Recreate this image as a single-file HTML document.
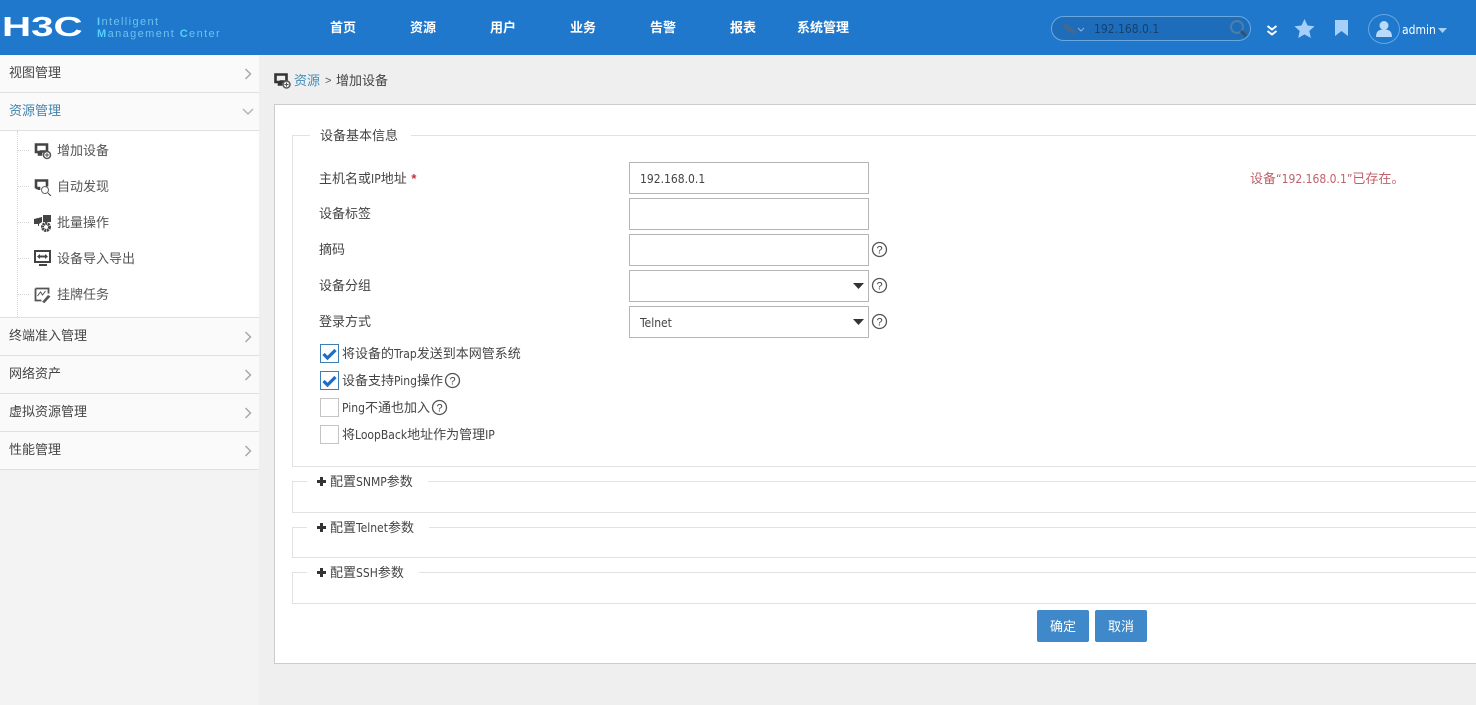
<!DOCTYPE html>
<html lang="zh"><head><meta charset="utf-8"><title>增加设备</title>
<style>
html,body{margin:0;padding:0}
body{width:1476px;height:705px;position:relative;overflow:hidden;background:#efefef;font:13px/16px "Liberation Sans","WenQuanYi Zen Hei","Noto Sans CJK SC",sans-serif;color:#444}
i{font:normal 12px/16px "DejaVu Sans Condensed","DejaVu Sans","Liberation Sans",sans-serif;font-stretch:condensed}
.a{position:absolute;white-space:nowrap}
.r{position:absolute;box-sizing:border-box}
.nav{top:20px;color:#fff;font-size:13px;font-weight:bold;width:80px;text-align:center}
.side{left:0;width:259px;height:38px;box-sizing:border-box;background:#fafafa;border-bottom:1px solid #e0e0e0}
.side span{position:absolute;left:9px;top:10px;color:#444}
.side svg{position:absolute;left:244px;top:13px}
.sub{left:57px;color:#555}
.ic{position:absolute}
.lbl{left:319px;color:#444}
.inp{position:absolute;left:629px;width:240px;height:32px;box-sizing:border-box;background:#fff;border:1px solid #b5b5b5;padding:8px 10px;color:#444}
.cb{position:absolute;left:320px;width:19px;height:19px;box-sizing:border-box;border:1px solid #c4c4c4;background:#fff}
.cb.on{background:#fff;border:1px solid #3d7eb5}
.fs{position:absolute;left:292px;width:1184px;box-sizing:border-box;border:1px solid #e2e2e2;border-right:0}
.leg{position:absolute;background:#fff;padding:0 15px 0 10px;color:#444}
.btn{position:absolute;top:610px;width:52px;height:32px;background:#3f88ca;color:#fff;text-align:center;line-height:34px;border-radius:2px}
.dash{position:absolute;border-top:1px dotted #d5d5d5;width:11px;left:18px}
</style></head><body>

<div class="r" style="left:0;top:0;width:1476px;height:55px;background:#1f78cb"></div>
<div class="a" style="left:2px;top:9px;font:bold 28px/36px 'Liberation Sans',sans-serif;color:#fff;transform:scaleX(1.44);transform-origin:left">H3C</div>
<div class="a" style="left:97px;top:16px;font-size:11px;line-height:12px;color:#6cc2f0;letter-spacing:1.4px"><b style="color:#55d0ff">I</b>ntelligent<br><b style="color:#55d0ff">M</b>anagement <b style="color:#55d0ff">C</b>enter</div>

<div class="a nav" style="left:303px">首页</div>
<div class="a nav" style="left:383px">资源</div>
<div class="a nav" style="left:463px">用户</div>
<div class="a nav" style="left:543px">业务</div>
<div class="a nav" style="left:623px">告警</div>
<div class="a nav" style="left:703px">报表</div>
<div class="a nav" style="left:783px">系统管理</div>

<div class="r" style="left:1051px;top:16px;width:200px;height:25px;border:1px solid #6aa8e2;border-radius:13px;background:#1e6dbb"></div>
<svg class="ic" style="left:1060px;top:21px" width="30" height="16"><path d="M2 4l5-1 4 4 5 3-2 3-5-2-5-4z" fill="#46688c"/><path d="M18 7l3 3 3-3" fill="none" stroke="#8fb4d8"/></svg>
<div class="a" style="left:1094px;top:21px;color:#17406b"><i>192.168.0.1</i></div>
<svg class="ic" style="left:1228px;top:19px" width="22" height="20"><circle cx="9" cy="8" r="6" fill="none" stroke="#4d7ea8" stroke-width="2"/><path d="M13 12l5 5" stroke="#33506c" stroke-width="3"/></svg>
<svg class="ic" style="left:1265px;top:24px" width="14" height="13"><path d="M2.500 2l4.500 3.500 4.500-3.500M2.500 7l4.500 3.500 4.500-3.500" fill="none" stroke="#fff" stroke-width="2"/></svg>
<svg class="ic" style="left:1294px;top:18px" width="21" height="21"><path d="M10.500 1l3 6.500 7 .8-5.200 4.700 1.500 7-6.300-3.600-6.300 3.600 1.500-7L.5 8.300l7-.8z" fill="#a6d0fb"/></svg>
<svg class="ic" style="left:1334px;top:19px" width="16" height="18"><path d="M1 1h13v16l-6.500-5L1 17z" fill="#a6d0fb"/></svg>
<div class="r" style="left:1368px;top:14px;width:32px;height:30px;border:1px solid #64a6e2;border-radius:50%"></div>
<svg class="ic" style="left:1375px;top:20px" width="18" height="18"><circle cx="9" cy="5.500" r="4.500" fill="#b9daf9"/><path d="M1 17c0-6 3-7.500 8-7.500s8 1.500 8 7.500z" fill="#b9daf9"/></svg>
<div class="a" style="left:1402px;top:22px;color:#fff"><i>admin</i></div>
<svg class="ic" style="left:1438px;top:28px" width="9" height="5"><path d="M0 0h9L4.500 5z" fill="#a6d0fb"/></svg>

<div class="r" style="left:0;top:55px;width:259px;height:650px;background:#f3f3f3"></div>
<div class="r side" style="top:55px"><span>视图管理</span><svg width="8" height="12"><path d="M1.500 1l5 5-5 5" fill="none" stroke="#aaa" stroke-width="1.500"/></svg></div>
<div class="r side" style="top:93px"><span style="color:#3f83ad">资源管理</span><svg width="12" height="8" style="left:242px;top:15px"><path d="M1 1l5 5 5-5" fill="none" stroke="#b5b5b5" stroke-width="1.500"/></svg></div>
<div class="r" style="left:0;top:131px;width:259px;height:187px;background:#fff;border-bottom:1px solid #e0e0e0;box-sizing:border-box"></div>
<div class="r" style="left:17px;top:131px;height:186px;border-left:1px dotted #d5d5d5"></div>
<div class="dash" style="top:150px"></div><div class="dash" style="top:186px"></div><div class="dash" style="top:222px"></div><div class="dash" style="top:258px"></div><div class="dash" style="top:294px"></div>

<svg class="ic" style="left:34px;top:142px" width="18" height="18"><path d="M2 2.500h11v7H7v3H5V10H2z" fill="none" stroke="#444" stroke-width="2.600"/><circle cx="13" cy="13" r="3.500" fill="#fff" stroke="#555" stroke-width="1.500"/><path d="M11 13h4M13 11v4" stroke="#555"/></svg>
<div class="a sub" style="top:143px">增加设备</div>
<svg class="ic" style="left:34px;top:178px" width="18" height="18"><path d="M2 10.500V2.500h11v6M2 10h3v2" fill="none" stroke="#444" stroke-width="2.600"/><circle cx="11" cy="12" r="3.500" fill="#fff" stroke="#666"/><path d="M14 15l3 3" stroke="#444"/></svg>
<div class="a sub" style="top:179px">自动发现</div>
<svg class="ic" style="left:34px;top:214px" width="18" height="18"><path d="M0 5l8-2v5l-3 2v2H4v-2H0zM9 1h8v7H9z" fill="#444"/><circle cx="12" cy="13" r="3.500" fill="#fff" stroke="#444" stroke-width="3" stroke-dasharray="2 .6"/></svg>
<div class="a sub" style="top:215px">批量操作</div>
<svg class="ic" style="left:34px;top:250px" width="18" height="17"><rect x="1" y="1" width="15" height="11" fill="none" stroke="#444" stroke-width="2"/><path d="M4 6.500h9" stroke="#444" stroke-width="2"/><path d="M6 4l-3 2.500L6 9zM11 4l3 2.500L11 9z" fill="#444"/><path d="M5 15h8" stroke="#444" stroke-width="2"/></svg>
<div class="a sub" style="top:251px">设备导入导出</div>
<svg class="ic" style="left:34px;top:286px" width="18" height="18"><path d="M1.500 2.500h13v5M1.500 2.500v12h6" fill="none" stroke="#555" stroke-width="1.800"/><path d="M3.500 10l3-4 2 3 3-4" fill="none" stroke="#555"/><path d="M8 16l6-7 2.500 1.500-6 6.500z" fill="#555"/></svg>
<div class="a sub" style="top:287px">挂牌任务</div>

<div class="r side" style="top:318px"><span>终端准入管理</span><svg width="8" height="12"><path d="M1.500 1l5 5-5 5" fill="none" stroke="#aaa" stroke-width="1.500"/></svg></div>
<div class="r side" style="top:356px"><span>网络资产</span><svg width="8" height="12"><path d="M1.500 1l5 5-5 5" fill="none" stroke="#aaa" stroke-width="1.500"/></svg></div>
<div class="r side" style="top:394px"><span>虚拟资源管理</span><svg width="8" height="12"><path d="M1.500 1l5 5-5 5" fill="none" stroke="#aaa" stroke-width="1.500"/></svg></div>
<div class="r side" style="top:432px"><span>性能管理</span><svg width="8" height="12"><path d="M1.500 1l5 5-5 5" fill="none" stroke="#aaa" stroke-width="1.500"/></svg></div>

<svg class="ic" style="left:274px;top:72px" width="18" height="18"><path d="M1.500 2.500h11v7H7v3H5V10H1.500z" fill="none" stroke="#333" stroke-width="2.600"/><circle cx="12.500" cy="12.500" r="3.500" fill="#efefef" stroke="#555" stroke-width="1.500"/><path d="M10.500 12.500h4M12.500 10.500v4" stroke="#555"/></svg>
<div class="a" style="left:294px;top:73px;color:#3f8bb5">资源</div>
<div class="a" style="left:325px;top:73px;color:#555;font-size:11px">&gt;</div>
<div class="a" style="left:336px;top:73px;color:#444">增加设备</div>

<div class="r" style="left:274px;top:104px;width:1202px;height:560px;background:#fff;border:1px solid #ccc;border-right:0"></div>

<div class="fs" style="top:135px;height:332px"></div>
<div class="a leg" style="left:310px;top:128px;padding-right:13px">设备基本信息</div>
<div class="a lbl" style="top:171px">主机名或<i>IP</i>地址 <b style="color:#c8323c;margin-left:1px">*</b></div>
<div class="a lbl" style="top:206px">设备标签</div>
<div class="a lbl" style="top:242px">摘码</div>
<div class="a lbl" style="top:278px">设备分组</div>
<div class="a lbl" style="top:314px">登录方式</div>

<div class="inp" style="top:162px"><i>192.168.0.1</i></div>
<div class="inp" style="top:198px"></div>
<div class="inp" style="top:234px"></div>
<div class="inp" style="top:270px"></div>
<div class="inp" style="top:306px"><i>Telnet</i></div>
<svg class="ic" style="left:853px;top:283px" width="11" height="6"><path d="M0 0h11L5.500 6z" fill="#333"/></svg>
<svg class="ic" style="left:853px;top:319px" width="11" height="6"><path d="M0 0h11L5.500 6z" fill="#333"/></svg>

<svg class="ic" style="left:871px;top:241px" width="17" height="17"><circle cx="8.500" cy="8.500" r="7" fill="none" stroke="#555" stroke-width="1.300"/><text x="8.500" y="12.500" text-anchor="middle" font-family="Liberation Sans" font-size="11" fill="#444">?</text></svg>
<svg class="ic" style="left:871px;top:277px" width="17" height="17"><circle cx="8.500" cy="8.500" r="7" fill="none" stroke="#555" stroke-width="1.300"/><text x="8.500" y="12.500" text-anchor="middle" font-family="Liberation Sans" font-size="11" fill="#444">?</text></svg>
<svg class="ic" style="left:871px;top:313px" width="17" height="17"><circle cx="8.500" cy="8.500" r="7" fill="none" stroke="#555" stroke-width="1.300"/><text x="8.500" y="12.500" text-anchor="middle" font-family="Liberation Sans" font-size="11" fill="#444">?</text></svg>

<div class="a" style="left:1250px;top:171px;color:#c0606a">设备<i>“192.168.0.1”</i>已存在。</div>

<div class="cb on" style="top:344px"><svg width="17" height="17" style="display:block"><path d="M2.500 9l4 4 8-8" fill="none" stroke="#1f6fc0" stroke-width="3.200"/></svg></div>
<div class="a" style="left:342px;top:346px">将设备的<i>Trap</i>发送到本网管系统</div>
<div class="cb on" style="top:371px"><svg width="17" height="17" style="display:block"><path d="M2.500 9l4 4 8-8" fill="none" stroke="#1f6fc0" stroke-width="3.200"/></svg></div>
<div class="a" style="left:342px;top:373px">设备支持<i>Ping</i>操作</div>
<svg class="ic" style="left:444px;top:372px" width="17" height="17"><circle cx="8.500" cy="8.500" r="7" fill="none" stroke="#555" stroke-width="1.300"/><text x="8.500" y="12.500" text-anchor="middle" font-family="Liberation Sans" font-size="11" fill="#444">?</text></svg>
<div class="cb" style="top:398px"></div>
<div class="a" style="left:342px;top:400px"><i>Ping</i>不通也加入</div>
<svg class="ic" style="left:431px;top:399px" width="17" height="17"><circle cx="8.500" cy="8.500" r="7" fill="none" stroke="#555" stroke-width="1.300"/><text x="8.500" y="12.500" text-anchor="middle" font-family="Liberation Sans" font-size="11" fill="#444">?</text></svg>
<div class="cb" style="top:425px"></div>
<div class="a" style="left:342px;top:427px">将<i>LoopBack</i>地址作为管理<i>IP</i></div>

<div class="fs" style="top:481px;height:32px"></div>
<div class="a leg" style="left:307px;top:474px"><svg width="9" height="9" style="margin-right:4px"><path d="M3 0h3v3h3v3H6v3H3V6H0V3h3z" fill="#333"/></svg>配置<i>SNMP</i>参数</div>
<div class="fs" style="top:527px;height:31px"></div>
<div class="a leg" style="left:307px;top:520px"><svg width="9" height="9" style="margin-right:4px"><path d="M3 0h3v3h3v3H6v3H3V6H0V3h3z" fill="#333"/></svg>配置<i>Telnet</i>参数</div>
<div class="fs" style="top:572px;height:32px"></div>
<div class="a leg" style="left:307px;top:565px"><svg width="9" height="9" style="margin-right:4px"><path d="M3 0h3v3h3v3H6v3H3V6H0V3h3z" fill="#333"/></svg>配置<i>SSH</i>参数</div>

<div class="btn" style="left:1037px">确定</div>
<div class="btn" style="left:1095px">取消</div>
</body></html>
